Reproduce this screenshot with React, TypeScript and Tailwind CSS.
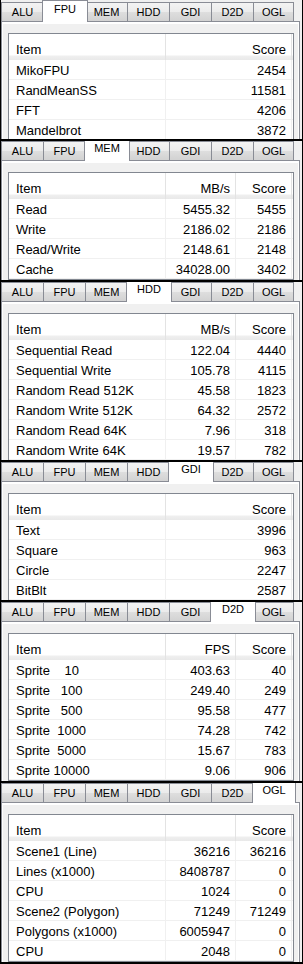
import React from "react";

const TABS = ["ALU", "FPU", "MEM", "HDD", "GDI", "D2D", "OGL"];

type PanelDef = {
  active: string;
  height: string;
  first?: boolean;
  headers: string[];
  rows: string[][];
};

const PANELS: PanelDef[] = [
  {
    active: "FPU",
    height: "h-[139px]",
    first: true,
    headers: ["Item", "Score"],
    rows: [
      ["MikoFPU", "2454"],
      ["RandMeanSS", "11581"],
      ["FFT", "4206"],
      ["Mandelbrot", "3872"],
    ],
  },
  {
    active: "MEM",
    height: "h-[139px]",
    headers: ["Item", "MB/s", "Score"],
    rows: [
      ["Read", "5455.32", "5455"],
      ["Write", "2186.02", "2186"],
      ["Read/Write", "2148.61", "2148"],
      ["Cache", "34028.00", "3402"],
    ],
  },
  {
    active: "HDD",
    height: "h-[178px]",
    headers: ["Item", "MB/s", "Score"],
    rows: [
      ["Sequential Read", "122.04", "4440"],
      ["Sequential Write", "105.78", "4115"],
      ["Random Read 512K", "45.58", "1823"],
      ["Random Write 512K", "64.32", "2572"],
      ["Random Read 64K", "7.96", "318"],
      ["Random Write 64K", "19.57", "782"],
    ],
  },
  {
    active: "GDI",
    height: "h-[138px]",
    headers: ["Item", "Score"],
    rows: [
      ["Text", "3996"],
      ["Square", "963"],
      ["Circle", "2247"],
      ["BitBlt", "2587"],
    ],
  },
  {
    active: "D2D",
    height: "h-[179px]",
    headers: ["Item", "FPS", "Score"],
    rows: [
      ["Sprite    10", "403.63", "40"],
      ["Sprite   100", "249.40", "249"],
      ["Sprite   500", "95.58", "477"],
      ["Sprite  1000", "74.28", "742"],
      ["Sprite  5000", "15.67", "783"],
      ["Sprite 10000", "9.06", "906"],
    ],
  },
  {
    active: "OGL",
    height: "h-[179px]",
    headers: ["Item", "", "Score"],
    rows: [
      ["Scene1 (Line)", "36216", "36216"],
      ["Lines (x1000)", "8408787", "0"],
      ["CPU", "1024", "0"],
      ["Scene2 (Polygon)", "71249", "71249"],
      ["Polygons (x1000)", "6005947", "0"],
      ["CPU", "2048", "0"],
    ],
  },
];

function TabBar({ active }: { active: string }) {
  return (
    <div className="flex h-[19px] shrink-0 bg-[#f0f0f0]">
      {TABS.map((t, i) => {
        const last = i === TABS.length - 1;
        if (t === active) {
          return (
            <div
              key={t}
              className={`relative z-10 -mt-[2px] -ml-[2px] -mr-[2px] flex h-[22px] shrink-0 justify-center border-x border-t border-[#898c95] bg-white pt-[2px] text-[11px] leading-[13px] text-black ${
                last ? "w-[44px]" : "w-[46px]"
              }`}
            >
              {t}
            </div>
          );
        }
        return (
          <div
            key={t}
            className={`flex h-[19px] shrink-0 items-center justify-center border-x border-t border-[#898c95] bg-[linear-gradient(#f3f3f3,#ebebeb_50%,#dedede_51%,#d2d2d2)] pt-px text-[11px] leading-[13px] text-black ${
              i === 0 ? "" : "-ml-px"
            } ${last ? "w-[41px]" : "w-[43px]"}`}
          >
            {t}
          </div>
        );
      })}
    </div>
  );
}

function ListView({ headers, rows }: { headers: string[]; rows: string[][] }) {
  const three = headers.length === 3;
  const widths = three ? ["w-[157px]", "w-[70px]", "w-[56px]"] : ["w-[157px]", "w-[126px]"];
  return (
    <div className="w-[286px] border border-[#828790] bg-white">
      <div className="flex h-[26px]">
        {headers.map((h, i) => (
          <div
            key={i}
            className={`${widths[i]} flex h-full shrink-0 border-r border-[#e3e3e3] bg-[linear-gradient(#ffffff_0px,#ffffff_21px,#efefef_22px,#e9e9e9_100%)] pt-[8px] text-[13px] leading-[15px] ${
              i === 0 ? "justify-start pl-[7px]" : "justify-end pr-[5px]"
            }`}
          >
            {h}
          </div>
        ))}
        <div className="flex-1 bg-[linear-gradient(#ffffff_0px,#ffffff_21px,#efefef_22px,#e9e9e9_100%)]" />
      </div>
      {rows.map((r, ri) => (
        <div key={ri} className="flex h-[20px] border-b border-[#f0f0f0]">
          {r.map((c, ci) => (
            <div
              key={ci}
              className={`${widths[ci]} flex h-full shrink-0 items-center border-r border-[#f0f0f0] pt-px text-[13px] leading-[15px] whitespace-pre ${
                ci === 0 ? "justify-start pl-[7px]" : "justify-end pr-[5px]"
              }`}
            >
              {c}
            </div>
          ))}
        </div>
      ))}
    </div>
  );
}

function Panel({ p }: { p: PanelDef }) {
  return (
    <div className={`${p.height} flex shrink-0 flex-col overflow-hidden bg-[#f0f0f0] ${p.first ? "pt-[2px]" : ""}`}>
      <TabBar active={p.active} />
      <div className="flex w-[299px] flex-1 flex-col border-x border-t border-[#898c95] bg-white px-px pt-[2px]">
        <div className="flex-1 bg-[#f0f0f0] pl-[5px] pt-[9px]">
          <ListView headers={p.headers} rows={p.rows} />
        </div>
      </div>
    </div>
  );
}

export default function App() {
  return (
    <div className="flex h-[964px] w-[303px] flex-col gap-[2px] bg-black px-px pb-[2px] font-['Liberation_Sans',Arial,sans-serif] text-black">
      {PANELS.map((p, i) => (
        <Panel key={i} p={p} />
      ))}
    </div>
  );
}
